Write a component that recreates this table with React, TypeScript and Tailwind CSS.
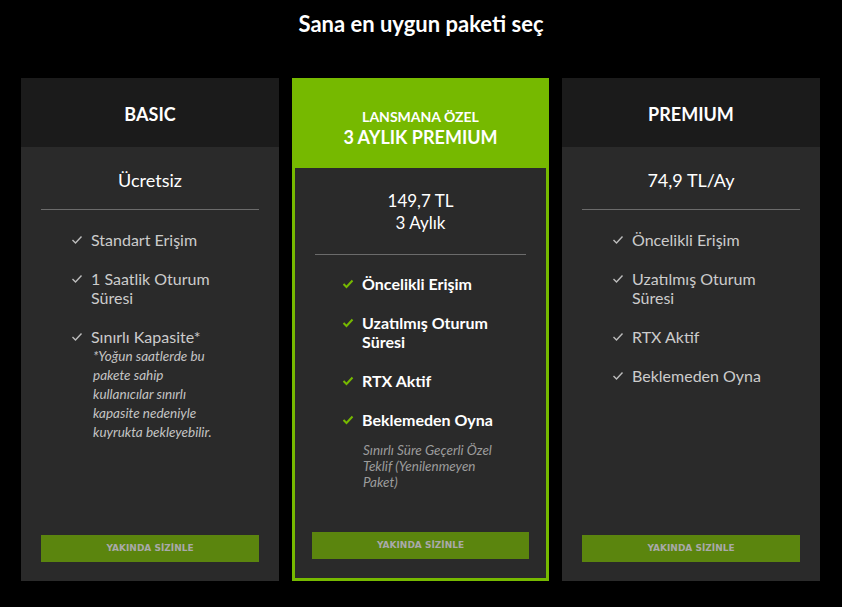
import type { ReactNode } from "react";

const font = { fontFamily: "Lato, 'Noto Sans', sans-serif" };

function Check({ green }: { green?: boolean }) {
  return (
    <svg width="12" height="10" viewBox="0 0 12 10" className="shrink-0 mt-[5px]">
      <polyline
        points="1.5,5 4.5,8 10.5,1.5"
        fill="none"
        stroke={green ? "#76b900" : "#bdbdbd"}
        strokeWidth={green ? 2 : 1.4}
      />
    </svg>
  );
}

function Feature({ children, green, bold, note }: { children: ReactNode; green?: boolean; bold?: boolean; note?: ReactNode }) {
  return (
    <li className="flex gap-[8px]">
      <Check green={green} />
      <div>
        <div className={bold ? "text-[16px] leading-[19px] font-bold text-white" : "text-[16px] leading-[19px] text-[#cccccc]"}>
          {children}
        </div>
        {note && <div className="italic text-[13.5px] leading-[19px] text-[#c4c4c4] mt-px pl-[2px]">{note}</div>}
      </div>
    </li>
  );
}

function Button() {
  return (
    <button
      className="mt-auto w-full h-[27px] bg-[#5b850e] text-[#a9a9a9] text-[9px] font-bold"
      style={{ fontFamily: "'DejaVu Sans', Verdana, sans-serif" }}
    >
      YAKINDA SİZİNLE
    </button>
  );
}

export default function App() {
  return (
    <div className="min-h-screen bg-black text-white" style={font}>
      <h1 className="text-center text-[22px] font-bold pt-[10px] leading-[28px]">Sana en uygun paketi seç</h1>

      <div className="grid grid-cols-[258px_257px_258px] gap-[13px] px-[21px] mt-[40px]">
        {/* BASIC */}
        <div className="flex flex-col h-[503px] bg-[#2a2a2a]">
          <div className="h-[69px] bg-[#1b1b1b] flex items-center justify-center pt-[4px] text-[18px] font-bold">BASIC</div>
          <div className="flex flex-col flex-1 px-[20px] pb-[19px]">
            <div className="text-center text-[18px] leading-[24px] pt-[21px] pb-[17px]">Ücretsiz</div>
            <div className="h-px bg-[#6b6b6b]" />
            <ul className="flex flex-col gap-[20px] pt-[20px] pl-[30px]">
              <Feature>Standart Erişim</Feature>
              <Feature>1 Saatlik Oturum<br />Süresi</Feature>
              <Feature
                note={<>*Yoğun saatlerde bu<br />pakete sahip<br />kullanıcılar sınırlı<br />kapasite nedeniyle<br />kuyrukta bekleyebilir.</>}
              >
                Sınırlı Kapasite*
              </Feature>
            </ul>
            <Button />
          </div>
        </div>

        {/* LAUNCH */}
        <div className="flex flex-col h-[503px] border-[3px] border-[#76b900] bg-[#2a2a2a]">
          <div className="h-[87px] bg-[#76b900] flex flex-col items-center justify-center pt-[6px] font-bold">
            <div className="text-[14px] leading-[19px]">LANSMANA ÖZEL</div>
            <div className="text-[18px] leading-[22px]">3 AYLIK PREMIUM</div>
          </div>
          <div className="flex flex-col flex-1 px-[17px] pb-[19px]">
            <div className="text-center text-[17px] leading-[22px] pt-[22px] pb-[20px]">
              149,7 TL<br />3 Aylık
            </div>
            <div className="h-px bg-[#6b6b6b] mx-[3px]" />
            <ul className="flex flex-col gap-[20px] pt-[19px] pl-[30px]">
              <Feature green bold>Öncelikli Erişim</Feature>
              <Feature green bold>Uzatılmış Oturum<br />Süresi</Feature>
              <Feature green bold>RTX Aktif</Feature>
              <Feature green bold>Beklemeden Oyna</Feature>
            </ul>
            <div className="pl-[51px] pt-[13px] italic text-[13.5px] leading-[16px] text-[#9c9c9c]">
              Sınırlı Süre Geçerli Özel<br />Teklif (Yenilenmeyen<br />Paket)
            </div>
            <Button />
          </div>
        </div>

        {/* PREMIUM */}
        <div className="flex flex-col h-[503px] bg-[#2a2a2a]">
          <div className="h-[69px] bg-[#1b1b1b] flex items-center justify-center pt-[4px] text-[18px] font-bold">PREMIUM</div>
          <div className="flex flex-col flex-1 px-[20px] pb-[19px]">
            <div className="text-center text-[18px] leading-[24px] pt-[21px] pb-[17px]">74,9 TL/Ay</div>
            <div className="h-px bg-[#6b6b6b]" />
            <ul className="flex flex-col gap-[20px] pt-[20px] pl-[30px]">
              <Feature>Öncelikli Erişim</Feature>
              <Feature>Uzatılmış Oturum<br />Süresi</Feature>
              <Feature>RTX Aktif</Feature>
              <Feature>Beklemeden Oyna</Feature>
            </ul>
            <Button />
          </div>
        </div>
      </div>
    </div>
  );
}
